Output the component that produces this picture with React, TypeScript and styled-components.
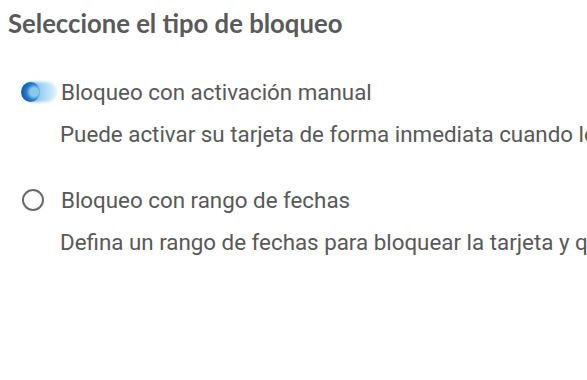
import React, { useState } from "react";
import styled, { createGlobalStyle } from "styled-components";

const Global = createGlobalStyle`
  html, body { margin: 0; padding: 0; background: #ffffff; }
  body { width: 587px; height: 380px; overflow: hidden; }
`;

const Page = styled.div`
  width: 587px;
  height: 380px;
  overflow: hidden;
  padding: 8px 0 0 8px;
  box-sizing: border-box;
  font-family: Roboto, "Liberation Sans", sans-serif;
  color: #555;
`;

const Title = styled.h2`
  margin: 0;
  font-family: Lato, "Liberation Sans", sans-serif;
  font-weight: 700;
  font-size: 25.7px;
  line-height: 30px;
  color: #5a5a5a;
  white-space: nowrap;
`;

const Options = styled.div`
  display: flex;
  flex-direction: column;
  gap: 40px;
  margin-top: 40.5px;
  padding-left: 12px;
`;

const Option = styled.div`
  display: flex;
  flex-direction: column;
`;

const Row = styled.label`
  display: flex;
  align-items: center;
  height: 26px;
  cursor: pointer;
`;

const RadioWrap = styled.span`
  position: relative;
  width: 41px;
  height: 22px;
  display: inline-block;
  flex: none;
`;

const Circle = styled.span`
  position: absolute;
  left: 2px;
  top: 0;
  width: 22px;
  height: 22px;
  box-sizing: border-box;
  border-radius: 50%;
  border: 2px solid #6a6a6a;
`;

const Smear = styled.span`
  position: absolute;
  left: 4px;
  top: 1px;
  width: 33px;
  height: 20px;
  border-radius: 10px;
  background: linear-gradient(90deg, rgba(60, 150, 220, 0.95), rgba(120, 195, 240, 0.7) 55%, rgba(175, 220, 248, 0.4));
  filter: blur(1.8px);
`;

const Dot = styled.span`
  position: absolute;
  left: 1px;
  top: 1px;
  width: 19px;
  height: 20px;
  border-radius: 50%;
  background: radial-gradient(circle at 70% 50%, #86caf0 0 25%, #2a7bc9 48%, #185fb0 70%);
  filter: blur(0.7px);
`;

const Label = styled.span`
  font-size: 22.35px;
  line-height: 26px;
  font-weight: 400;
  color: #585858;
  white-space: nowrap;
`;

const Desc = styled.p`
  margin: 16px 0 0 40px;
  font-size: 22.35px;
  line-height: 26px;
  font-weight: 400;
  color: #585858;
  white-space: nowrap;
`;

const options = [
  {
    label: "Bloqueo con activación manual",
    desc: "Puede activar su tarjeta de forma inmediata cuando lo desee",
  },
  {
    label: "Bloqueo con rango de fechas",
    desc: "Defina un rango de fechas para bloquear la tarjeta y que se active automáticamente",
  },
];

export default function App() {
  const [sel, setSel] = useState(0);
  return (
    <>
      <Global />
      <Page>
        <Title>Seleccione el tipo de bloqueo</Title>
        <Options>
          {options.map((o, i) => (
            <Option key={i}>
              <Row onClick={() => setSel(i)}>
                <RadioWrap>
                  {sel === i ? (
                    <>
                      <Smear />
                      <Dot />
                    </>
                  ) : (
                    <Circle />
                  )}
                </RadioWrap>
                <Label>{o.label}</Label>
              </Row>
              <Desc>{o.desc}</Desc>
            </Option>
          ))}
        </Options>
      </Page>
    </>
  );
}
